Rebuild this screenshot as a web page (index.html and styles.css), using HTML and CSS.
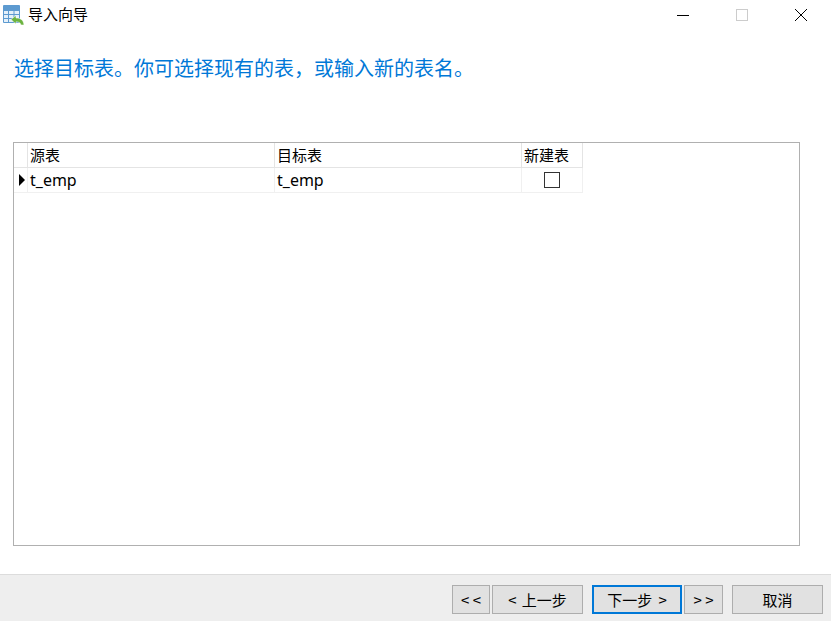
FILE: index.html
```html
<!DOCTYPE html>
<html lang="zh">
<head>
<meta charset="utf-8">
<title>导入向导</title>
<link rel="stylesheet" href="styles.css">
</head>
<body>
<div class="window">
  <header class="titlebar">
    <svg class="app-icon" width="21" height="20" viewBox="0 0 21 20">
      <rect x="0" y="0" width="17" height="18" rx="1" fill="#5d9ad0"/>
      <rect x="1" y="6" width="4" height="3" fill="#e4f0fa"/>
      <rect x="6" y="6" width="4.500" height="3" fill="#e4f0fa"/>
      <rect x="11.500" y="6" width="4.500" height="3" fill="#e4f0fa"/>
      <rect x="1" y="10" width="4" height="3" fill="#e4f0fa"/>
      <rect x="6" y="10" width="4.500" height="3" fill="#e4f0fa"/>
      <rect x="11.500" y="10" width="4.500" height="3" fill="#e4f0fa"/>
      <rect x="1" y="14" width="4" height="3" fill="#e4f0fa"/>
      <rect x="6" y="14" width="4" height="3" fill="#e4f0fa"/>
      <path d="M8 14.500 L13 10.500 V13 C17.500 13 20.500 15 21 20 H18 C17.500 17.800 15.800 16.800 13 16.800 V19 Z" fill="#6cb33f" stroke="#fff" stroke-width="0.500"/>
    </svg>
    <span class="title">导入向导</span>
    <div class="controls">
      <svg class="ctl" width="12" height="12" viewBox="0 0 12 12"><path d="M0 6.500H12" stroke="#000" fill="none"/></svg>
      <svg class="ctl" width="12" height="12" viewBox="0 0 12 12"><rect x="0.500" y="0.500" width="11" height="11" stroke="#ccc" fill="none"/></svg>
      <svg class="ctl" width="12" height="12" viewBox="0 0 12 12"><path d="M0 0L12 12M12 0L0 12" stroke="#000" fill="none"/></svg>
    </div>
  </header>
  <h1 class="heading">选择目标表。你可选择现有的表，或输入新的表名。</h1>
  <section class="grid">
    <div class="grid-table">
      <div class="cell corner"></div>
      <div class="cell head src">源表</div>
      <div class="cell head dst">目标表</div>
      <div class="cell head new">新建表</div>
      <div class="cell rowhead"><span class="arrow"></span></div>
      <div class="cell data src">t_emp</div>
      <div class="cell data dst">t_emp</div>
      <div class="cell data new"><span class="checkbox"></span></div>
    </div>
  </section>
  <footer class="footer">
    <button class="btn narrow-a">&lt; &lt;</button>
    <button class="btn wide-a">&lt; 上一步</button>
    <button class="btn primary">下一步 &gt;</button>
    <button class="btn narrow-b">&gt; &gt;</button>
    <button class="btn cancel">取消</button>
  </footer>
</div>
</body>
</html>
```
FILE: styles.css
```css
* { box-sizing: border-box; }
html, body { margin: 0; padding: 0; }
body {
  background: #fff;
  font-family: "Noto Sans CJK SC", "Noto Sans", sans-serif;
  color: #000;
  overflow: hidden;
}
.window {
  width: 831px;
  height: 621px;
  display: flex;
  flex-direction: column;
}
.titlebar {
  height: 30px;
  flex: none;
  display: flex;
  align-items: center;
  padding-left: 3px;
}
.app-icon { flex: none; margin-right: 4px; }
.title { font-size: 15px; line-height: 30px; position: relative; top: -1px; }
.controls {
  margin-left: auto;
  display: flex;
  gap: 47px;
  padding-right: 24px;
  align-items: center;
}
.ctl { display: block; }
.heading {
  margin: 0;
  padding: 0 0 0 14px;
  height: 112px;
  flex: none;
  font-size: 20px;
  font-weight: 400;
  line-height: 76px;
  color: #0078d7;
}
.grid {
  flex: none;
  margin-left: 13px;
  width: 787px;
  height: 404px;
  border: 1px solid #b0b0b0;
}
.grid-table {
  display: grid;
  grid-template-columns: 14px 247px 247px 61px;
  grid-template-rows: 25px 25px;
  width: 569px;
}
.cell {
  border-right: 1px solid #e4e4e4;
  border-bottom: 1px solid #e4e4e4;
  font-size: 15px;
  padding-left: 2px;
  white-space: nowrap;
  overflow: hidden;
}
.corner, .rowhead { padding: 0; }
.head { line-height: 23px; }
.data {
  font-size: 16px;
  line-height: 24px;
  border-color: #f0f0f0;
  font-family: "Noto Sans", sans-serif;
}
.rowhead { display: flex; align-items: center; border-right-color: #f0f0f0; border-bottom-color: #f0f0f0; padding-left: 5px; }
.arrow {
  display: block;
  width: 0;
  height: 0;
  border-left: 6px solid #000;
  border-top: 6px solid transparent;
  border-bottom: 6px solid transparent;
}
.data.new { display: flex; justify-content: center; align-items: center; padding: 0 0 1px 0; }
.checkbox {
  display: block;
  width: 16px;
  height: 16px;
  border: 1px solid #333;
  background: #fff;
}
.footer {
  margin-top: 28px;
  flex: 1;
  background: #eeeeee;
  border-top: 1px solid #dcdcdc;
  display: flex;
  align-items: flex-start;
  padding: 10px 8px 0 0;
  justify-content: flex-end;
}
.btn {
  height: 29px;
  background: #e1e1e1;
  border: 1px solid #adadad;
  font: 400 15px/1 "Noto Sans CJK SC", "Noto Sans", sans-serif;
  color: #000;
  padding: 0;
  border-radius: 0;
  word-spacing: 2px;
}
.narrow-a { width: 38px; margin-right: 2px; word-spacing: 0; }
.wide-a { width: 91px; margin-right: 9px; }
.primary { width: 90px; margin-right: 2px; border: 2px solid #0078d7; word-spacing: 3px; }
.narrow-b { width: 39px; margin-right: 9px; word-spacing: 0; }
.cancel { width: 91px; }
```
